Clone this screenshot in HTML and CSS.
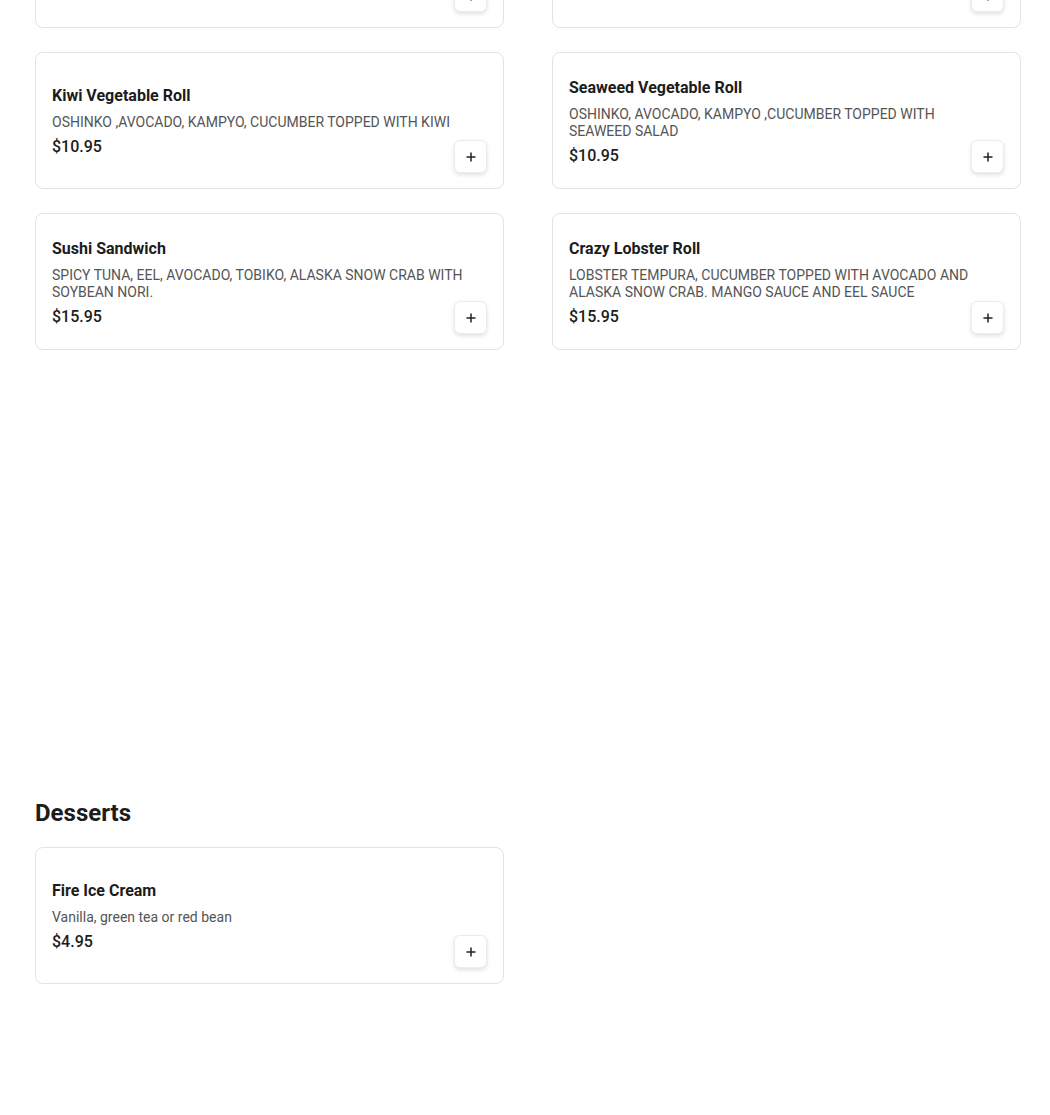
FILE: index.html
```html
<!DOCTYPE html>
<html lang="en">
<head>
<meta charset="utf-8">
<title>Menu</title>
<link rel="stylesheet" href="styles.css">
</head>
<body>
<main class="menu">
  <section class="category category-rolls">
    <div class="grid">
      <article class="card">
        <div class="info">
          <h3 class="name">Avocado Roll</h3>
          <p class="desc">AVOCADO</p>
          <p class="price">$5.95</p>
        </div>
        <button class="add" aria-label="Add"><svg viewBox="0 0 12 12" width="12" height="12"><path d="M6 1.5v9M1.5 6h9" stroke="#222" stroke-width="1.5" fill="none"/></svg></button>
      </article>
      <article class="card">
        <div class="info">
          <h3 class="name">Cucumber Roll</h3>
          <p class="desc">CUCUMBER</p>
          <p class="price">$5.95</p>
        </div>
        <button class="add" aria-label="Add"><svg viewBox="0 0 12 12" width="12" height="12"><path d="M6 1.5v9M1.5 6h9" stroke="#222" stroke-width="1.5" fill="none"/></svg></button>
      </article>

      <article class="card">
        <div class="info">
          <h3 class="name">Kiwi Vegetable Roll</h3>
          <p class="desc">OSHINKO ,AVOCADO, KAMPYO, CUCUMBER TOPPED WITH KIWI</p>
          <p class="price">$10.95</p>
        </div>
        <button class="add" aria-label="Add"><svg viewBox="0 0 12 12" width="12" height="12"><path d="M6 1.5v9M1.5 6h9" stroke="#222" stroke-width="1.5" fill="none"/></svg></button>
      </article>
      <article class="card">
        <div class="info">
          <h3 class="name">Seaweed Vegetable Roll</h3>
          <p class="desc">OSHINKO, AVOCADO, KAMPYO ,CUCUMBER TOPPED WITH SEAWEED SALAD</p>
          <p class="price">$10.95</p>
        </div>
        <button class="add" aria-label="Add"><svg viewBox="0 0 12 12" width="12" height="12"><path d="M6 1.5v9M1.5 6h9" stroke="#222" stroke-width="1.5" fill="none"/></svg></button>
      </article>

      <article class="card">
        <div class="info">
          <h3 class="name">Sushi Sandwich</h3>
          <p class="desc">SPICY TUNA, EEL, AVOCADO, TOBIKO, ALASKA SNOW CRAB WITH SOYBEAN NORI.</p>
          <p class="price">$15.95</p>
        </div>
        <button class="add" aria-label="Add"><svg viewBox="0 0 12 12" width="12" height="12"><path d="M6 1.5v9M1.5 6h9" stroke="#222" stroke-width="1.5" fill="none"/></svg></button>
      </article>
      <article class="card">
        <div class="info">
          <h3 class="name">Crazy Lobster Roll</h3>
          <p class="desc">LOBSTER TEMPURA, CUCUMBER TOPPED WITH AVOCADO AND ALASKA SNOW CRAB. MANGO SAUCE AND EEL SAUCE</p>
          <p class="price">$15.95</p>
        </div>
        <button class="add" aria-label="Add"><svg viewBox="0 0 12 12" width="12" height="12"><path d="M6 1.5v9M1.5 6h9" stroke="#222" stroke-width="1.5" fill="none"/></svg></button>
      </article>
    </div>
  </section>

  <section class="category category-desserts">
    <h2 class="category-title">Desserts</h2>
    <div class="grid">
      <article class="card">
        <div class="info">
          <h3 class="name">Fire Ice Cream</h3>
          <p class="desc">Vanilla, green tea or red bean</p>
          <p class="price">$4.95</p>
        </div>
        <button class="add" aria-label="Add"><svg viewBox="0 0 12 12" width="12" height="12"><path d="M6 1.5v9M1.5 6h9" stroke="#222" stroke-width="1.5" fill="none"/></svg></button>
      </article>
    </div>
  </section>
</main>
</body>
</html>
```
FILE: styles.css
```css
* { box-sizing: border-box; }

html, body {
  margin: 0;
  padding: 0;
  background: #ffffff;
}

body {
  font-family: Roboto, "Noto Sans", Arial, sans-serif;
  color: #1f1f1f;
  height: 1115px;
  overflow: hidden;
}

.menu {
  width: 986px;
  margin-left: 35px;
  margin-top: -109px;
}

.category-rolls {
  margin-bottom: 447px;
}

.category-title {
  margin: 0 0 18px 0;
  font-size: 24px;
  line-height: 32px;
  font-weight: 700;
  color: #1c1c1c;
}

.grid {
  display: grid;
  grid-template-columns: 469px 469px;
  column-gap: 48px;
  row-gap: 24px;
}

.card {
  position: relative;
  height: 137px;
  border: 1px solid #e3e3e3;
  border-radius: 8px;
  background: #fff;
  padding: 1px 16px 0;
  display: flex;
  align-items: center;
}

.info {
  width: 100%;
  padding-right: 17px;
}

.name {
  margin: 0 0 8px 0;
  font-size: 16px;
  line-height: 21px;
  font-weight: 700;
  color: #1c1c1c;
}

.desc {
  margin: 0 0 5px 0;
  font-size: 14px;
  line-height: 17px;
  color: #555555;
}

.price {
  margin: 0;
  font-size: 16px;
  line-height: 21px;
  font-weight: 500;
  color: #1c1c1c;
}

.add {
  position: absolute;
  right: 16px;
  bottom: 15px;
  width: 33px;
  height: 33px;
  padding: 0;
  border: 1px solid #ececec;
  border-radius: 6px;
  background: #fff;
  box-shadow: 0 2px 4px rgba(0, 0, 0, 0.12);
  display: flex;
  align-items: center;
  justify-content: center;
  cursor: pointer;
}

.add svg {
  display: block;
}
```
